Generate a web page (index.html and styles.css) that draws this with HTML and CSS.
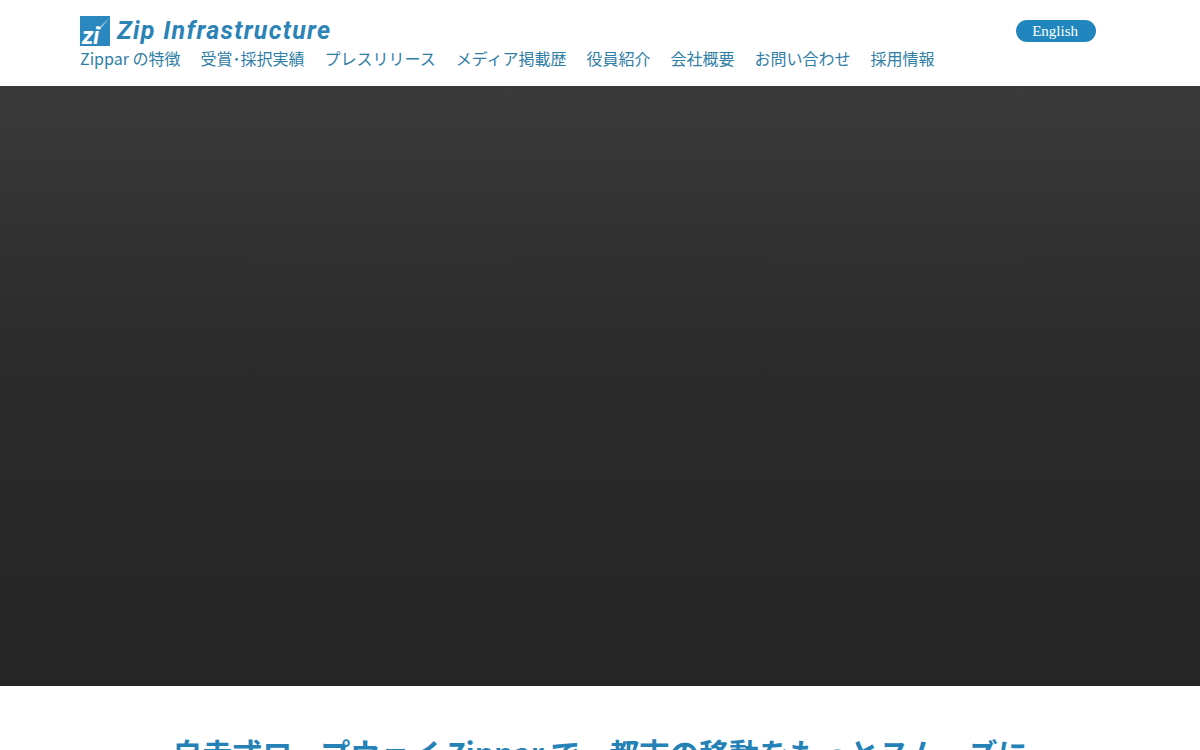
FILE: index.html
```html
<!DOCTYPE html>
<html lang="ja">
<head>
    <meta charset="UTF-8">
    <meta name="viewport" content="width=device-width, initial-scale=1.0">
    <title>Zip Infrastructure</title>
    <link rel="stylesheet" href="styles.css">
</head>
<body>
    <header class="site-header">
        <div class="header-inner">
            <div class="header-left">
                <a class="logo" href="#">
                    <span class="logo-mark">
                        <svg class="logo-streak" viewBox="0 0 30 30" width="30" height="30">
                            <path d="M30 1 L20.5 10.5 L21.5 11.5 Z" fill="#a9d3ea"/>
                            <circle cx="19.5" cy="12" r="1.5" fill="#fff"/>
                        </svg>
                        <span class="logo-zi">zi</span>
                    </span>
                    <span class="logo-name">Zip Infrastructure</span>
                </a>
                <nav class="main-nav">
                    <a href="#">Zippar の特徴</a>
                    <a href="#">受賞･採択実績</a>
                    <a href="#">プレスリリース</a>
                    <a href="#">メディア掲載歴</a>
                    <a href="#">役員紹介</a>
                    <a href="#">会社概要</a>
                    <a href="#">お問い合わせ</a>
                    <a href="#">採用情報</a>
                </nav>
            </div>
            <a class="lang-button" href="#">English</a>
        </div>
    </header>

    <section class="hero"></section>

    <section class="intro">
        <h1>自走式ロープウェイ Zippar で、都市の移動をもっとスムーズに</h1>
    </section>
</body>
</html>
```

FILE: styles.css
```css
html, body {
    height: 750px;
    overflow: hidden;
}

body {
    margin: 0;
    padding: 0;
    background-color: #fff;
    font-family: "Noto Sans CJK JP", "Noto Sans", sans-serif;
}

a {
    text-decoration: none;
}

.site-header {
    height: 86px;
    padding: 0 104px 0 80px;
}

.header-inner {
    display: flex;
    justify-content: space-between;
    align-items: flex-start;
}

.header-left {
    display: flex;
    flex-direction: column;
    padding-top: 16px;
}

.logo {
    display: flex;
    align-items: center;
    gap: 7px;
    height: 30px;
}

.logo-mark {
    position: relative;
    display: block;
    width: 30px;
    height: 30px;
    background-color: #2a88bf;
}

.logo-streak {
    position: absolute;
    top: 0;
    left: 0;
}

.logo-zi {
    position: absolute;
    left: 2px;
    bottom: 2px;
    font-family: "Roboto", sans-serif;
    font-size: 23px;
    font-style: italic;
    font-weight: 700;
    line-height: 14px;
    color: #fff;
}

.logo-name {
    font-family: "Roboto", sans-serif;
    font-size: 25px;
    font-style: italic;
    font-weight: 700;
    letter-spacing: 1.3px;
    color: #2b83b6;
    line-height: 30px;
}

.main-nav {
    display: flex;
    gap: 20px;
}

.main-nav a {
    font-size: 16px;
    line-height: 24px;
    color: #2f7ea6;
}

.lang-button {
    height: 22px;
    margin-top: 20px;
    padding: 0 18px 0 16px;
    border-radius: 11px;
    background-color: #2186bd;
    color: #fff;
    font-family: "Liberation Serif", serif;
    font-size: 15px;
    line-height: 22px;
}

.hero {
    height: 600px;
    background: linear-gradient(180deg, #3a3a3a 0%, #2b2b2b 45%, #252525 100%);
}

.intro {
    padding-top: 44px;
    text-align: center;
}

.intro h1 {
    margin: 0;
    font-size: 30px;
    font-weight: 700;
    line-height: 44px;
    color: #2482b6;
}
```
